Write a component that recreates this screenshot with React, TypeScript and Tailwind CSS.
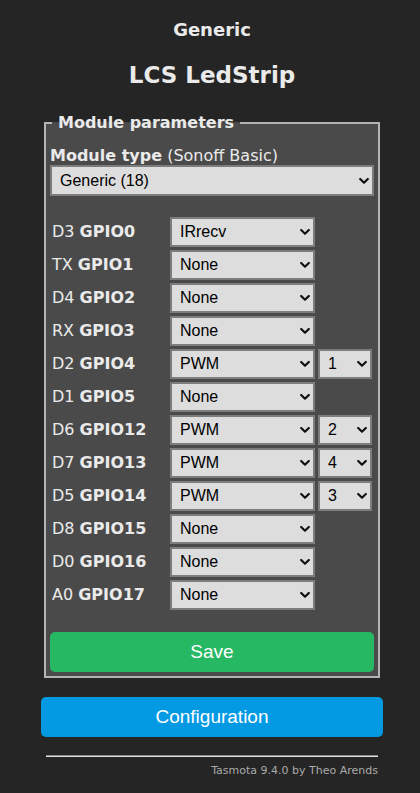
import { useState } from "react";

type Pin = {
  board: string;
  gpio: string;
  fn: string;
  channel?: string;
};

const pins: Pin[] = [
  { board: "D3", gpio: "GPIO0", fn: "IRrecv" },
  { board: "TX", gpio: "GPIO1", fn: "None" },
  { board: "D4", gpio: "GPIO2", fn: "None" },
  { board: "RX", gpio: "GPIO3", fn: "None" },
  { board: "D2", gpio: "GPIO4", fn: "PWM", channel: "1" },
  { board: "D1", gpio: "GPIO5", fn: "None" },
  { board: "D6", gpio: "GPIO12", fn: "PWM", channel: "2" },
  { board: "D7", gpio: "GPIO13", fn: "PWM", channel: "4" },
  { board: "D5", gpio: "GPIO14", fn: "PWM", channel: "3" },
  { board: "D8", gpio: "GPIO15", fn: "None" },
  { board: "D0", gpio: "GPIO16", fn: "None" },
  { board: "A0", gpio: "GPIO17", fn: "None" },
];

const functions = ["None", "IRrecv", "PWM", "Relay", "Button", "Led"];
const channels = ["1", "2", "3", "4", "5"];

const Chevron = () => (
  <svg
    width="10"
    height="7"
    viewBox="0 0 10 7"
    className="pointer-events-none absolute right-[5px] top-1/2 -translate-y-1/2"
  >
    <polyline
      points="1.2,1.5 5,5.2 8.8,1.5"
      fill="none"
      stroke="#111"
      strokeWidth="2.2"
      strokeLinecap="round"
      strokeLinejoin="round"
    />
  </svg>
);

interface SelectProps {
  value: string;
  options: string[];
  onChange: (value: string) => void;
  className?: string;
}

const Select = ({ value, options, onChange, className = "" }: SelectProps) => (
  <div className={`relative ${className}`}>
    <select
      value={value}
      onChange={(e) => onChange(e.target.value)}
      className="w-full h-full appearance-none bg-[#dddddd] border-2 border-[#7d7d7d] pl-[8px] pr-[20px] text-[16px] text-black font-['Liberation_Sans',Arial,sans-serif] outline-none"
    >
      {options.map((o) => (
        <option key={o} value={o}>
          {o}
        </option>
      ))}
    </select>
    <Chevron />
  </div>
);

const App = () => {
  const [module, setModule] = useState("Generic (18)");
  const [rows, setRows] = useState(pins);

  const update = (i: number, patch: Partial<Pin>) =>
    setRows((prev) => prev.map((p, j) => (j === i ? { ...p, ...patch } : p)));

  return (
    <div className="min-h-[793px] bg-[#252525] text-[#eaeaea] font-['DejaVu_Sans',Verdana,sans-serif]">
      <div className="w-[342px] ml-[41px] pt-[20px] flex flex-col">
        <h3 className="text-center font-bold text-[18px] leading-[20px]">Generic</h3>
        <h2 className="mt-[21px] text-center font-bold text-[23px] leading-[28px]">
          LCS LedStrip
        </h2>

        <fieldset className="mt-[24px] ml-[3px] w-[336px] bg-[#4a4a4a] border-2 border-[#b4b4b4] px-[4px] pb-[4px]">
          <legend className="ml-[2px] px-[6px] font-bold text-[16px] leading-[20px]">
            Module parameters
          </legend>

          <div className="pt-[14px] text-[16px] leading-[18px]">
            <b>Module type</b> (Sonoff Basic)
          </div>
          <Select
            value={module}
            options={["Generic (18)", "Sonoff Basic (1)", "Sonoff RF (2)"]}
            onChange={setModule}
            className="h-[31px] w-full"
          />

          <div className="mt-[21px] flex flex-col gap-[3px]">
            {rows.map((p, i) => (
              <div key={p.gpio} className="flex items-center h-[30px]">
                <div className="w-[120px] pl-[2px] text-[16px] whitespace-nowrap">
                  {p.board} <b>{p.gpio}</b>
                </div>
                <Select
                  value={p.fn}
                  options={functions}
                  onChange={(v) => update(i, { fn: v })}
                  className="w-[145px] h-[30px]"
                />
                {p.channel && (
                  <Select
                    value={p.channel}
                    options={channels}
                    onChange={(v) => update(i, { channel: v })}
                    className="ml-[3px] w-[54px] h-[30px]"
                  />
                )}
              </div>
            ))}
          </div>

          <button
            type="button"
            className="mt-[22px] w-full h-[40px] rounded-[5px] bg-[#26b862] text-white text-[19px] font-['Liberation_Sans',Arial,sans-serif]"
          >
            Save
          </button>
        </fieldset>

        <button
          type="button"
          className="mt-[19px] w-full h-[40px] rounded-[5px] bg-[#0399e3] text-white text-[19px] font-['Liberation_Sans',Arial,sans-serif]"
        >
          Configuration
        </button>

        <div className="mt-[18px] ml-[5px] w-[332px] border-t border-t-[#8a8a8a] border-b border-b-[#e0e0e0]" />

        <div className="mt-[7px] mr-[5px] text-right text-[11px] leading-[14px] text-[#aaaaaa]">
          Tasmota 9.4.0 by Theo Arends
        </div>
      </div>
    </div>
  );
};

export default App;
